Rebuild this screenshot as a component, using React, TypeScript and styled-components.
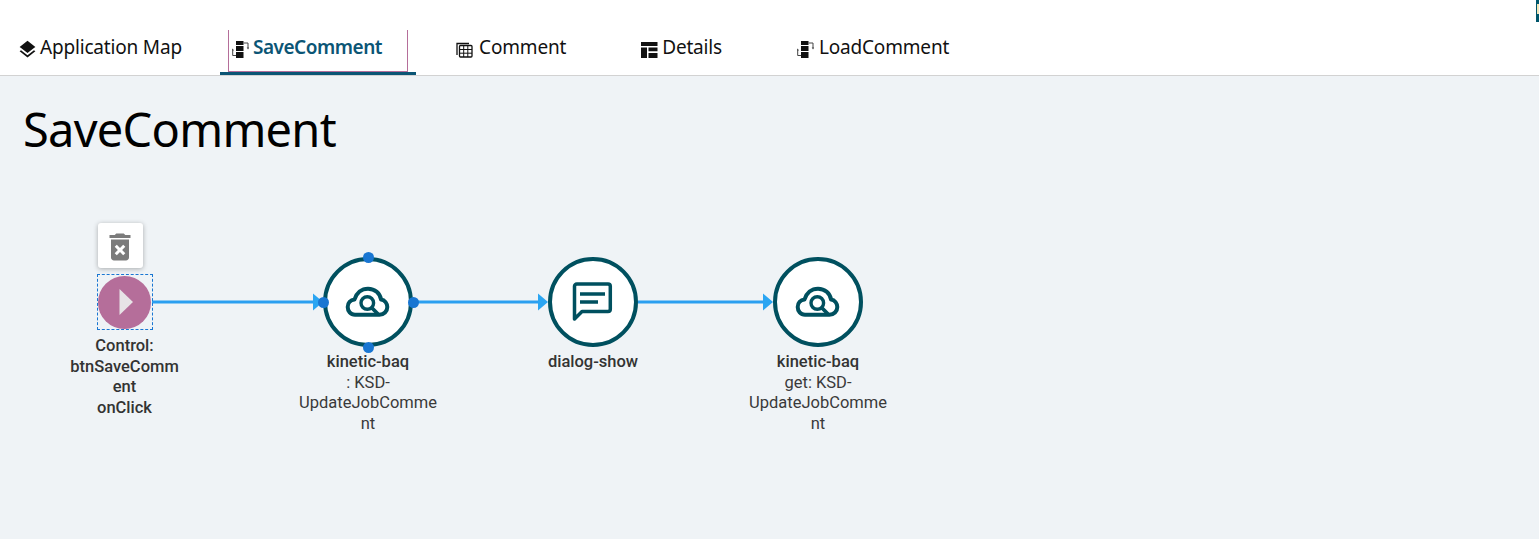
import React from "react";
import styled, { createGlobalStyle } from "styled-components";
import { MdDeleteForever, MdLayers } from "react-icons/md";

const Global = createGlobalStyle`
  html, body { margin: 0; padding: 0; background: #eff3f6; overflow: hidden; }
`;
const Page = styled.div`
  position: relative;
  width: 1539px;
  height: 539px;
  background: #eff3f6;
  overflow: hidden;
  display: flex;
  flex-direction: column;
`;
const Corner = styled.div`
  position: absolute;
  top: 0;
  right: 0;
  width: 3px;
  height: 22px;
  background: #00566b;
  &::after {
    content: "";
    position: absolute;
    top: 4px;
    left: 1px;
    width: 2px;
    height: 10px;
    background: #f3e6b8;
  }
`;
const TabBar = styled.nav`
  display: flex;
  height: 45px;
  padding: 30px 0 0 7px;
  background: #fff;
  border-bottom: 1px solid #d2d2d2;
  flex: none;
`;
const Tab = styled.div<{ $active?: boolean; $gap: number; $iconGap: number }>`
  position: relative;
  display: flex;
  align-items: flex-start;
  gap: ${(p) => p.$iconGap}px;
  height: 45px;
  box-sizing: border-box;
  margin-left: ${(p) => p.$gap}px;
  padding: 4px 34px 0 12px;
  font-family: "Noto Sans", "Liberation Sans", sans-serif;
  font-size: 19px;
  line-height: 26px;
  letter-spacing: ${(p) => (p.$active ? "-0.47px" : "-0.18px")};
  font-weight: ${(p) => (p.$active ? 600 : 400)};
  color: ${(p) => (p.$active ? "#0b5575" : "#111")};
  border-bottom: 3px solid ${(p) => (p.$active ? "#0b5575" : "transparent")};
  white-space: nowrap;
`;
const TabFocus = styled.span`
  position: absolute;
  top: 0;
  left: 8px;
  right: 8px;
  bottom: 0;
  border: 1px solid #b56e9a;
  border-top: 0;
`;
const TabIcon = styled.span`
  display: flex;
  align-items: center;
  justify-content: center;
  width: 17px;
  height: 18px;
  margin-top: 6px;
  flex: none;
  color: #111;
  svg {
    flex: none;
  }
`;
const Heading = styled.h1`
  margin: 23px 0 0 23px;
  font-family: "Noto Sans", "Liberation Sans", sans-serif;
  font-size: 47px;
  letter-spacing: -0.75px;
  line-height: 60px;
  font-weight: 400;
  color: #000;
`;
const Canvas = styled.div`
  position: relative;
  flex: 1;
`;
const Edges = styled.svg`
  position: absolute;
  inset: 0;
  width: 100%;
  height: 100%;
`;
const NodeBox = styled.div<{ $cx: number; $w: number; $top: number }>`
  position: absolute;
  left: ${(p) => p.$cx - p.$w / 2}px;
  top: ${(p) => p.$top}px;
  width: ${(p) => p.$w}px;
  display: flex;
  flex-direction: column;
  align-items: center;
`;
const Circle = styled.div`
  position: relative;
  box-sizing: border-box;
  width: 90px;
  height: 90px;
  border: 4px solid #00505f;
  border-radius: 50%;
  background: #fff;
  display: flex;
  align-items: center;
  justify-content: center;
  flex: none;
`;
const Handle = styled.span<{ $x: number; $y: number }>`
  position: absolute;
  width: 11px;
  height: 11px;
  border-radius: 50%;
  background: #1976d2;
  left: ${(p) => p.$x - 5.5}px;
  top: ${(p) => p.$y - 5.5}px;
`;
const Label = styled.div<{ $offset: number; $nudge?: number }>`
  margin-top: ${(p) => p.$offset}px;
  width: 100%;
  box-sizing: border-box;
  padding-right: ${(p) => p.$nudge ?? 0}px;
  font-family: Roboto, "Liberation Sans", sans-serif;
  font-size: 16.5px;
  line-height: 20.5px;
  text-align: center;
  color: #3a3a3a;
  overflow-wrap: anywhere;
`;
const Strong = styled.div`
  font-weight: 500;
  color: #333;
`;
const TrashCard = styled.div`
  width: 45px;
  height: 45px;
  box-sizing: border-box;
  padding-top: 2px;
  background: #fff;
  border-radius: 3px;
  box-shadow: 0 1px 5px rgba(0, 0, 0, 0.3);
  display: flex;
  align-items: center;
  justify-content: center;
  color: #7b7b7b;
  flex: none;
  margin-left: -10px;
`;
const StartFrame = styled.div`
  box-sizing: border-box;
  width: 56px;
  height: 56px;
  margin-top: 6px;
  border: 1px dashed #1976d2;
  display: flex;
  align-items: center;
  justify-content: flex-start;
  flex: none;
`;
const StartCircle = styled.div`
  width: 53px;
  height: 53px;
  border-radius: 50%;
  background: #b56e9a;
  display: flex;
  align-items: center;
  justify-content: center;
`;

const FlowIcon = () => (
  <svg width="17" height="18" viewBox="0 0 17 18" fill="none">
    <path d="M4 1h7.500v4H4zM4 6h7.500v5H4zM4 12h7.500v6H4z" fill="#111" />
    <path d="M11.500 3H16v5M4 15.500H.7V10" stroke="#444" strokeWidth="1" />
    <path d="M14.700 7.500h2.600L16 9.500zM-.6 10.500h2.600L.7 8.500z" fill="#444" />
  </svg>
);
const TableIcon = () => (
  <svg width="17" height="18" viewBox="0 0 17 18" fill="none" stroke="#111">
    <path d="M1 15V3.500h12" strokeWidth="1.300" />
    <rect x="3.500" y="5.500" width="12.500" height="11.500" rx="1" strokeWidth="1.300" />
    <path d="M3.500 9.500h12.500M3.500 13.200h12.500M7.700 5.500V17M11.800 5.500V17" strokeWidth="1" />
  </svg>
);
const QuiltIcon = () => (
  <svg width="17" height="18" viewBox="0 0 17 18" fill="#111">
    <path d="M0 2h16.500v4H0zM0 7.500h6V18H0zM7.500 7.500h9v3.800h-9zM7.500 13h9v5h-9z" />
  </svg>
);
const CloudSearch = () => (
  <svg width="46" height="34" viewBox="0 0 46 34" fill="none" stroke="#00505f" strokeLinecap="round" strokeLinejoin="round">
    <path
      d="M11 29.700H10C5.500 29.700 2.700 26 2.700 22C2.700 18 5.500 15 9.500 14.500C11.500 8 16.500 3.700 23 3.700C30 3.700 35 8.500 36 14.500C39.800 15 42.300 18.500 42.300 22C42.300 26.500 38.800 29.700 34.500 29.700H11z"
      strokeWidth="4"
    />
    <circle cx="22.300" cy="18" r="6.300" strokeWidth="3.400" />
    <path d="M27 23l6 6" strokeWidth="3.800" />
  </svg>
);
const ChatIcon = () => (
  <svg width="42" height="42" viewBox="0 0 42 42" fill="none" stroke="#00505f">
    <path d="M2.500 38V5.300C2.500 4 3.500 3 4.800 3H36c1.300 0 2.300 1 2.300 2.300v23c0 1.300-1 2.200-2.300 2.200H10z" strokeWidth="3.500" strokeLinejoin="round" />
    <path d="M8 13h25M8 21h18" strokeWidth="3.500" />
  </svg>
);

const arrows = [323, 548, 773];
const tabs = [
  { label: "Application Map", icon: <MdLayers size={21} />, gap: 0, iconGap: 4 },
  { label: "SaveComment", icon: <FlowIcon />, gap: 4, iconGap: 4, active: true },
  { label: "Comment", icon: <TableIcon />, gap: 28, iconGap: 6 },
  { label: "Details", icon: <QuiltIcon />, gap: 29, iconGap: 4 },
  { label: "LoadComment", icon: <FlowIcon />, gap: 29, iconGap: 5 },
];

export default function App() {
  return (
    <Page>
      <Global />
      <Corner />
      <TabBar>
        {tabs.map((t) => (
          <Tab key={t.label} $active={t.active} $gap={t.gap} $iconGap={t.iconGap}>
            {t.active && <TabFocus />}
            <TabIcon>{t.icon}</TabIcon>
            {t.label}
          </Tab>
        ))}
      </TabBar>
      <Heading>SaveComment</Heading>
      <Canvas>
        <Edges viewBox="0 0 1539 379" preserveAspectRatio="xMinYMin">
          <g transform="translate(0,-159)">
            <path d="M152 302H318M413 302H543M638 302H768" stroke="#2b9ff0" strokeWidth="3" />
            {arrows.map((x) => (
              <path key={x} d={`M${x - 10} 293.500L${x} 302L${x - 10} 310.500z`} fill="#2aa5f2" />
            ))}
          </g>
        </Edges>
        <NodeBox $cx={125} $w={110} $top={64}>
          <TrashCard>
            <MdDeleteForever size={36} />
          </TrashCard>
          <StartFrame>
            <StartCircle>
              <svg width="16" height="28" viewBox="0 0 16 28">
                <path d="M2.500 1L16 14L2.500 27z" fill="#e7e3e6" />
              </svg>
            </StartCircle>
          </StartFrame>
          <Label $offset={6} $nudge={1}>
            <Strong>
              Control:
              <br />
              btnSaveComment
              <br />
              onClick
            </Strong>
          </Label>
        </NodeBox>
        <NodeBox $cx={368} $w={140} $top={98}>
          <Circle>
            <CloudSearch />
            <Handle $x={41} $y={-4} />
            <Handle $x={-4} $y={41} />
            <Handle $x={86} $y={41} />
            <Handle $x={41} $y={86} />
          </Circle>
          <Label $offset={5}>
            <Strong>kinetic-baq</Strong>: KSD-UpdateJobComment
          </Label>
        </NodeBox>
        <NodeBox $cx={593} $w={140} $top={98}>
          <Circle>
            <ChatIcon />
          </Circle>
          <Label $offset={5}>
            <Strong>dialog-show</Strong>
          </Label>
        </NodeBox>
        <NodeBox $cx={818} $w={140} $top={98}>
          <Circle>
            <CloudSearch />
          </Circle>
          <Label $offset={5}>
            <Strong>kinetic-baq</Strong>get: KSD-UpdateJobComment
          </Label>
        </NodeBox>
      </Canvas>
    </Page>
  );
}
